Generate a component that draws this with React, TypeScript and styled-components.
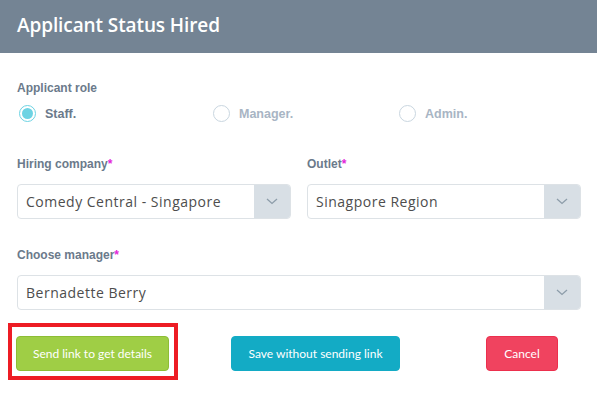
import React from "react";
import styled, { createGlobalStyle } from "styled-components";

const Global = createGlobalStyle`
  html, body { margin: 0; padding: 0; background: #ffffff; }
  * { box-sizing: border-box; }
`;

const Page = styled.div`
  width: 597px;
  height: 399px;
  background: #fff;
  overflow: hidden;
`;

const Header = styled.div`
  height: 53px;
  background: #748494;
  display: flex;
  align-items: center;
  padding: 0 0 4px 17px;
`;

const Title = styled.h1`
  margin: 0;
  font-family: "Open Sans", sans-serif;
  font-weight: 600;
  font-size: 19px;
  color: #ffffff;
  letter-spacing: -0.1px;
`;

const Body = styled.div`
  padding: 0 16px 0 17px;
`;

const Label = styled.div<{ $top: number }>`
  margin-top: ${(p) => p.$top}px;
  font-family: "Liberation Sans", Arial, sans-serif;
  font-weight: 700;
  font-size: 12px;
  line-height: 14px;
  color: #6b7a8b;
`;

const Req = styled.span`
  color: #e326d9;
`;

const RadioRow = styled.div`
  margin-top: 10px;
  display: grid;
  grid-template-columns: 194px 186px 1fr;
  padding-left: 2px;
`;

const RadioItem = styled.label`
  display: flex;
  align-items: center;
  gap: 9px;
  height: 17px;
`;

const Circle = styled.span<{ $on?: boolean }>`
  width: 17px;
  height: 17px;
  border-radius: 50%;
  border: 1.5px solid ${(p) => (p.$on ? "#6dd3e3" : "#c9d6e0")};
  display: flex;
  align-items: center;
  justify-content: center;
  &::after {
    content: "";
    width: 11px;
    height: 11px;
    border-radius: 50%;
    background: ${(p) => (p.$on ? "#6dd3e3" : "transparent")};
  }
`;

const RadioText = styled.span<{ $on?: boolean }>`
  font-family: "Liberation Sans", Arial, sans-serif;
  font-weight: 700;
  font-size: 12.5px;
  color: ${(p) => (p.$on ? "#6b7a8b" : "#a8b5c4")};
`;

const FieldGrid = styled.div`
  display: grid;
  grid-template-columns: 1fr 1fr;
  column-gap: 16px;
`;

const Field = styled.div``;

const Select = styled.div`
  margin-top: 13px;
  height: 35px;
  border: 1px solid #dde2e6;
  border-radius: 4px;
  display: flex;
  overflow: hidden;
`;

const Value = styled.div`
  flex: 1;
  display: flex;
  align-items: center;
  padding-left: 8px;
  font-family: "Open Sans", sans-serif;
  font-size: 14px;
  color: #4d4d4d;
  letter-spacing: 0.5px;
`;

const Arrow = styled.div`
  width: 36px;
  background: #d8dfe5;
  display: flex;
  align-items: center;
  justify-content: center;
`;

const Buttons = styled.div`
  margin-top: 26px;
  display: flex;
  align-items: center;
`;

const Highlight = styled.div`
  position: relative;
  margin-left: -1px;
`;

const Frame = styled.div`
  position: absolute;
  left: -8px;
  top: -13px;
  width: 170px;
  height: 57px;
  border: 4px solid #ed1c24;
  pointer-events: none;
`;

const Btn = styled.button<{ $bg: string; $border: string; $w: number; $ml?: number }>`
  width: ${(p) => p.$w}px;
  margin-left: ${(p) => p.$ml ?? 0}px;
  height: 35px;
  border-radius: 4px;
  border: 1px solid ${(p) => p.$border};
  background: ${(p) => p.$bg};
  color: #fff;
  font-family: Lato, sans-serif;
  font-size: 12px;
  padding: 0;
  cursor: pointer;
`;

const Chevron = () => (
  <svg width="12" height="7" viewBox="0 0 12 7">
    <path d="M1 1 L6 5.5 L11 1" fill="none" stroke="#8d9daa" strokeWidth="1.3" />
  </svg>
);

const SelectBox = ({ value }: { value: string }) => (
  <Select>
    <Value>{value}</Value>
    <Arrow>
      <Chevron />
    </Arrow>
  </Select>
);

export default function App() {
  return (
    <Page>
      <Global />
      <Header>
        <Title>Applicant Status Hired</Title>
      </Header>
      <Body>
        <Label $top={28}>Applicant role</Label>
        <RadioRow>
          <RadioItem>
            <Circle $on />
            <RadioText $on>Staff.</RadioText>
          </RadioItem>
          <RadioItem>
            <Circle />
            <RadioText>Manager.</RadioText>
          </RadioItem>
          <RadioItem>
            <Circle />
            <RadioText>Admin.</RadioText>
          </RadioItem>
        </RadioRow>
        <FieldGrid>
          <Field>
            <Label $top={35}>
              Hiring company<Req>*</Req>
            </Label>
            <SelectBox value="Comedy Central - Singapore" />
          </Field>
          <Field>
            <Label $top={35}>
              Outlet<Req>*</Req>
            </Label>
            <SelectBox value="Sinagpore Region" />
          </Field>
        </FieldGrid>
        <Label $top={29}>
          Choose manager<Req>*</Req>
        </Label>
        <SelectBox value="Bernadette Berry" />
        <Buttons>
          <Highlight>
            <Btn $bg="#9fce45" $border="#8dbd35" $w={153}>
              Send link to get details
            </Btn>
            <Frame />
          </Highlight>
          <Btn $bg="#13abc5" $border="#13abc5" $w={169} $ml={62}>
            Save without sending link
          </Btn>
          <Btn $bg="#f0435f" $border="#ec2f4d" $w={72} $ml={86}>
            Cancel
          </Btn>
        </Buttons>
      </Body>
    </Page>
  );
}
